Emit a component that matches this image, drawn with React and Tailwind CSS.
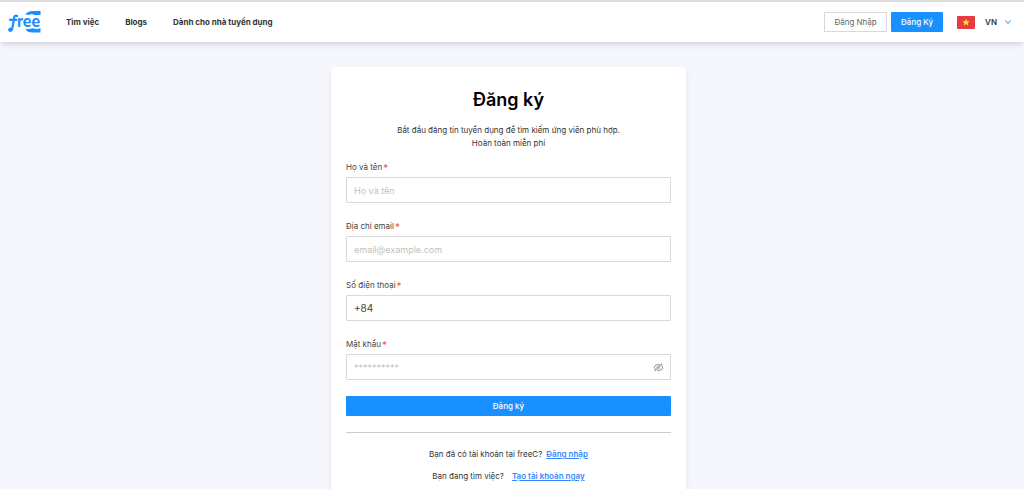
import { useState } from "react";
import { AiOutlineEyeInvisible, AiOutlineEye } from "react-icons/ai";

const navLinks = [
  { label: "Tìm việc", href: "/jobs" },
  { label: "Blogs", href: "/blogs" },
  { label: "Dành cho nhà tuyển dụng", href: "/employers" },
];

const Logo = () => (
  <svg viewBox="0 0 34 24" className="h-6 w-[34px]" fill="#1890ff" role="img" aria-label="freeC">
    <path d="M17.500 5C18.500 2 21.500 1 24.500 1H32.500V5H26C25 3.600 23 3.600 22 4.800C20.500 4.600 19 4.500 17.500 5Z" />
    <path d="M17.500 18.500C19.500 19.500 22 19 25 18.200C27 19 30 19.200 32.500 18.200V22.500H24.500C21 22.500 18.500 21.500 17.500 18.500Z" />
    <path
      d="M9 6C7.500 5 6.300 6 6 8.300L4.600 17C4.200 20.600 2.400 21.600 1.500 20.600C.8 19.400 1.800 18.300 3.400 18.800M2 9.800H8.400"
      fill="none"
      stroke="#1890ff"
      strokeWidth="2.200"
      strokeLinecap="round"
    />
    <text x="9" y="17" fontSize="16" fontWeight="900" fontFamily="Lato, sans-serif">
      ree
    </text>
  </svg>
);

const VietnamFlag = () => (
  <svg viewBox="0 0 18 13" className="h-[13px] w-[18px]" aria-hidden="true">
    <rect width="18" height="13" rx="1" fill="#e73b3f" />
    <path
      d="M9 2.800L10 5.300H12.700L10.600 7L11.400 9.700L9 8.100L6.600 9.700L7.400 7L5.300 5.300H8Z"
      fill="#ffeb3b"
    />
  </svg>
);

const ChevronDown = () => (
  <svg viewBox="0 0 6 6" className="ml-2 size-[6px]" fill="none" stroke="#1890ff" aria-hidden="true">
    <path d="M.5 1.500L3 4.500L5.500 1.500" />
  </svg>
);

const Header = () => (
  <header className="flex h-[42px] items-center justify-between border-t-2 border-[#dedede] bg-white pl-2 pr-[13px] shadow-md">
    <div className="flex items-center">
      <a href="/">
        <Logo />
      </a>
      <nav className="ml-6 flex items-center gap-[26px] text-[8px] font-bold text-[#333]">
        {navLinks.map((link) => (
          <a key={link.href} href={link.href}>
            {link.label}
          </a>
        ))}
      </nav>
    </div>
    <div className="flex items-center text-[8px]">
      <button type="button" className="h-5 w-[63px] border border-[#d9d9d9] bg-white text-[#666]">
        Đăng Nhập
      </button>
      <button type="button" className="ml-1 h-5 w-[52px] rounded-[1px] bg-[#1890ff] font-medium text-white">
        Đăng Ký
      </button>
      <button type="button" className="ml-[14px] flex items-center font-semibold text-[#333]">
        <VietnamFlag />
        <span className="ml-2.5">VN</span>
        <ChevronDown />
      </button>
    </div>
  </header>
);

const Field = ({ id, label, children, ...props }) => (
  <div className="mb-4">
    <label htmlFor={id} className="mb-1 flex h-[13px] items-center text-[8px] text-[#444]">
      {label}
      <span className="ml-px h-[10px] text-[10px] leading-[12px] text-[#ff4d4f]">*</span>
    </label>
    <div className="relative">
      <input
        id={id}
        name={id}
        className="block h-[26px] w-full rounded-[1px] border border-[#d9d9d9] px-[7px] text-[10px] text-[#444] placeholder:text-[9px] placeholder:text-[#bfbfbf]"
        {...props}
      />
      {children}
    </div>
  </div>
);

const App = () => {
  const [formData, setFormData] = useState({
    name: "",
    email: "",
    phone: "+84",
    password: "",
  });
  const [showPassword, setShowPassword] = useState(false);

  const handleChange = (e) => {
    const { name, value } = e.target;
    setFormData((prev) => ({ ...prev, [name]: value }));
  };

  const handleSubmit = (e) => {
    e.preventDefault();
  };

  return (
    <div className="flex min-h-screen flex-col bg-[#f6f7fc] font-[Inter,sans-serif]">
      <Header />
      <main className="flex flex-1 justify-center pl-4 pr-[23px] pt-[25px]">
        <div className="w-full max-w-[355px] rounded-t-sm bg-white px-[15px] pt-[21px] shadow-md">
          <h1 className="text-center text-lg leading-6 font-semibold text-black">Đăng ký</h1>
          <p className="mt-3 text-center text-[8px] leading-[13px] text-[#333]">
            Bắt đầu đăng tin tuyển dụng để tìm kiếm ứng viên phù hợp.
            <br />
            Hoàn toàn miễn phí
          </p>
          <form onSubmit={handleSubmit} className="mt-[10px]">
            <Field id="name" label="Họ và tên" placeholder="Họ và tên" value={formData.name} onChange={handleChange} />
            <Field
              id="email"
              type="email"
              label="Địa chỉ email"
              placeholder="email@example.com"
              value={formData.email}
              onChange={handleChange}
            />
            <Field id="phone" type="tel" label="Số điện thoại" value={formData.phone} onChange={handleChange} />
            <Field
              id="password"
              type={showPassword ? "text" : "password"}
              label="Mật khẩu"
              placeholder="**********"
              value={formData.password}
              onChange={handleChange}
            >
              <button
                type="button"
                aria-label="Hiện mật khẩu"
                onClick={() => setShowPassword(!showPassword)}
                className="absolute inset-y-0 right-[7px] text-[#8c8c8c]"
              >
                {showPassword ? <AiOutlineEye className="size-[11px]" /> : <AiOutlineEyeInvisible className="size-[11px]" />}
              </button>
            </Field>
            <button type="submit" className="block h-5 w-full rounded-[1px] bg-[#1890ff] text-[8px] font-medium text-white">
              Đăng ký
            </button>
          </form>
          <hr className="mt-4 mb-[14px] border-[#ccc]" />
          <div className="space-y-2 text-center text-[8px] leading-[14px] text-[#333]">
            <p>
              Bạn đã có tài khoản tại freeC?
              <a href="/login" className="ml-1 font-semibold text-[#3388ff] underline">
                Đăng nhập
              </a>
            </p>
            <p>
              Bạn đang tìm việc?
              <a href="/signup" className="ml-2 font-semibold text-[#3388ff] underline">
                Tạo tài khoản ngay
              </a>
            </p>
          </div>
        </div>
      </main>
    </div>
  );
};

export default App;
